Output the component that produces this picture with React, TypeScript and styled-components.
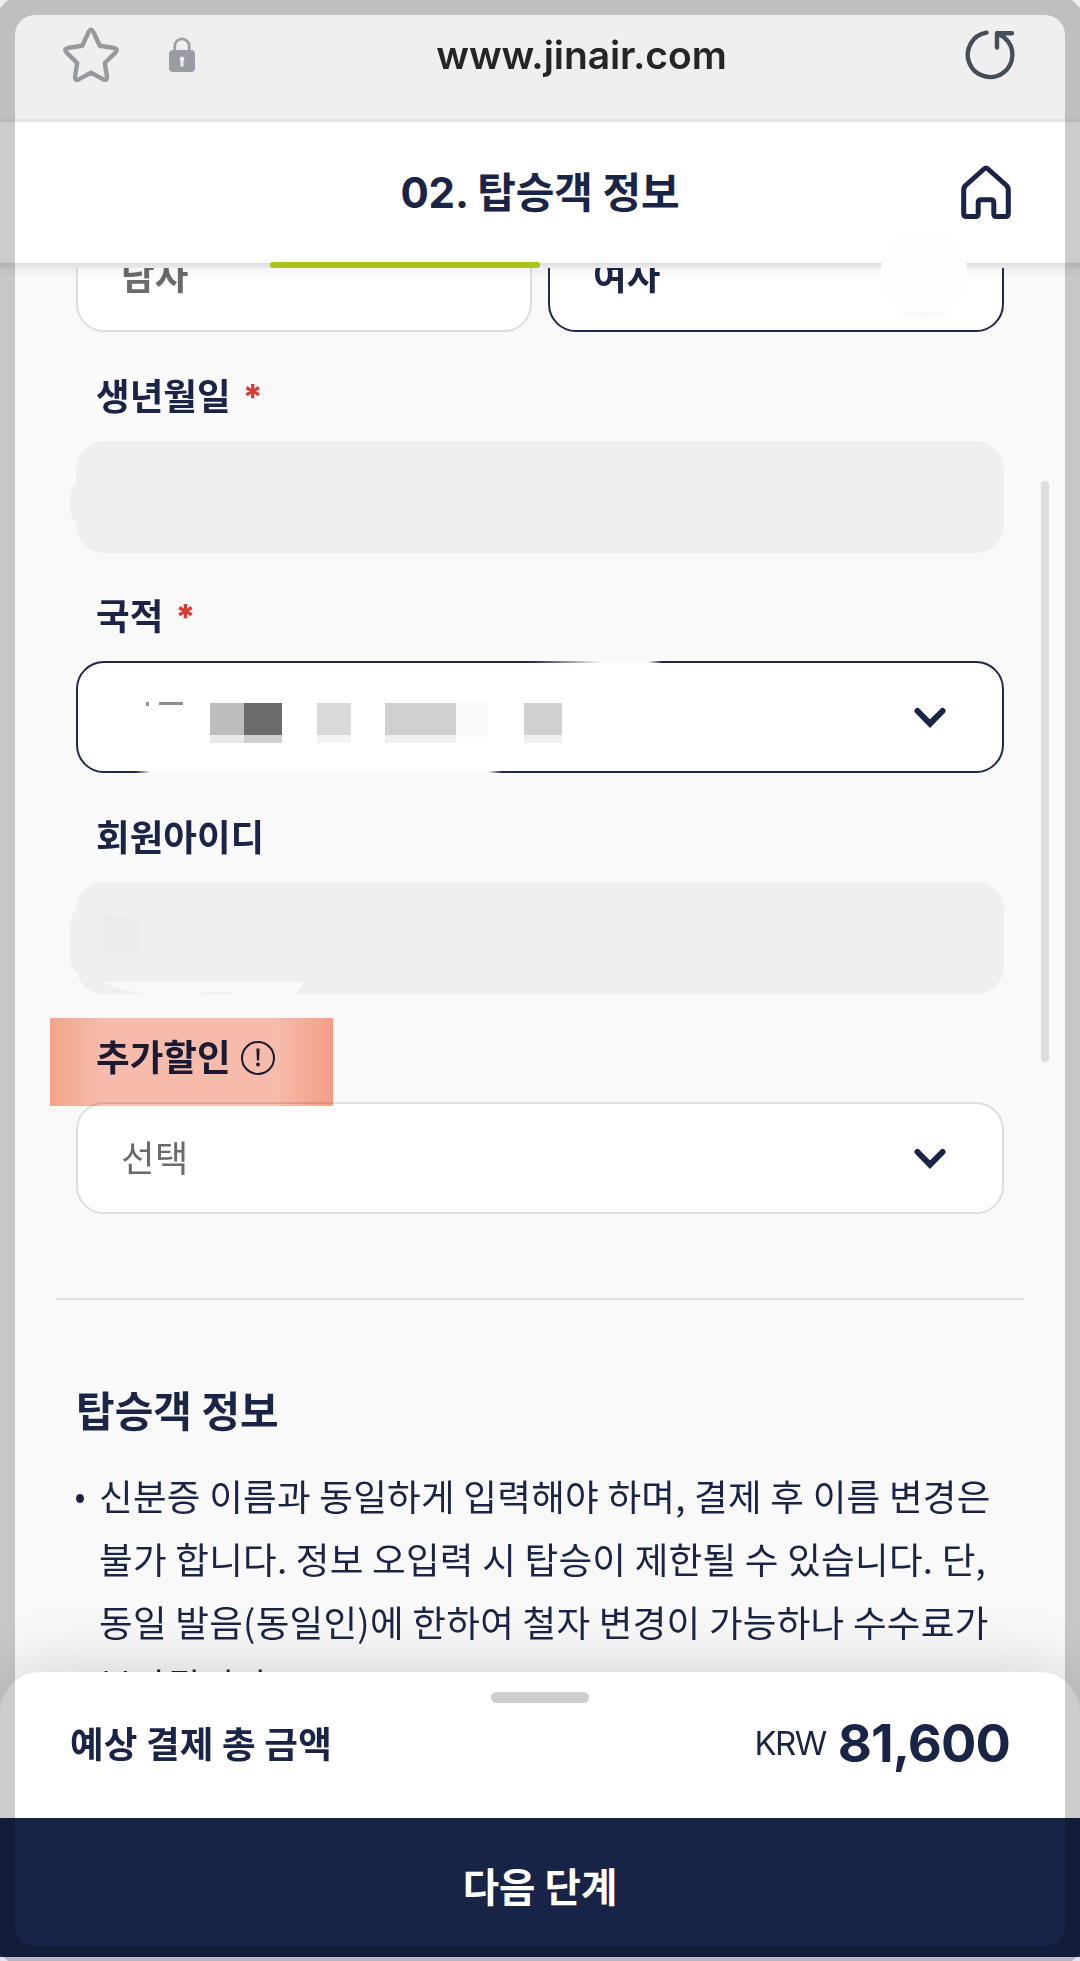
import React from 'react';
import styled, { createGlobalStyle, css } from 'styled-components';

const NAVY = '#1a2446';
const KR = `'Noto Sans CJK KR', 'Noto Sans', sans-serif`;
const LATIN = `Inter, 'Noto Sans CJK KR', sans-serif`;

const GlobalStyle = createGlobalStyle`
  *, *::before, *::after { box-sizing: border-box; }
  body { margin: 0; background: #f9f9f9; }
`;

const Screen = styled.div`
  position: relative;
  display: flex;
  flex-direction: column;
  width: 1080px;
  height: 1961px;
  overflow: hidden;
  background: #f9f9f9;
  color: ${NAVY};
  font-family: ${KR};
`;

const AddressBar = styled.header`
  display: flex;
  align-items: flex-start;
  flex: none;
  height: 122px;
  padding: 26px 61px 0 62px;
  background: #efefef;
  border-bottom: 3px solid #e6e6e6;
`;

const LockIcon = styled.svg`
  margin: 8px 0 0 46px;
`;

const Url = styled.div`
  flex: 1;
  padding: 5px 0 0 4px;
  text-align: center;
  font: 600 39px/48px ${LATIN};
  letter-spacing: -0.1px;
  color: #252525;
`;

const StepHeader = styled.div`
  position: relative;
  z-index: 2;
  display: grid;
  grid-template-columns: 1fr auto 1fr;
  align-items: center;
  flex: none;
  height: 141px;
  padding: 0 67px;
  background: #fff;
`;

const StepTitle = styled.h1`
  grid-column: 2;
  margin: 0;
  font: 700 42px/60px ${LATIN};
  letter-spacing: -0.15px;
`;

const HomeIcon = styled.svg`
  justify-self: end;
`;

const ProgressTrack = styled.div`
  position: relative;
  z-index: 2;
  display: grid;
  grid-template-columns: repeat(4, 1fr);
  flex: none;
  height: 5px;
  background: linear-gradient(#dedede, #ebebeb);
  box-shadow: 0 3px 8px rgba(0, 0, 0, 0.09);
`;

const ProgressStep = styled.div`
  grid-column: 2;
  height: 6px;
  margin-top: -1px;
  border-radius: 3px;
  background: #acc31c;
`;

const Content = styled.main`
  flex: 1;
  min-height: 0;
  overflow: hidden;
  padding: 0 76px;
`;

const GenderRow = styled.div`
  display: grid;
  grid-template-columns: 1fr 1fr;
  gap: 16px;
  margin-top: -48px;
`;

const Box = styled.div<{ $tone?: 'active' | 'disabled' }>`
  position: relative;
  display: flex;
  align-items: center;
  justify-content: space-between;
  height: 112px;
  padding: 0 54px 0 43px;
  border-radius: 28px;
  border: 2px solid #dedede;
  background: #fff;
  font-size: 36.6px;
  color: #6a6a6a;
  ${(p) => p.$tone === 'active' && css`border-color: #20294a; color: ${NAVY};`}
  ${(p) => p.$tone === 'disabled' && css`border-color: #efefef; background: #efefef;`}
`;

const GenderText = styled.span`
  margin-bottom: 3px;
  font-weight: 700;
  line-height: 52px;
`;

const Placeholder = styled.span`
  margin-bottom: 2px;
  line-height: 52px;
`;

const Label = styled.div`
  display: flex;
  align-items: center;
  height: 108.5px;
  padding: 17px 0 0 20px;
  font-size: 36.6px;
  font-weight: 700;
  line-height: 52px;
`;

const Required = styled.span`
  margin: 4px 0 0 12px;
  font-family: ${LATIN};
  font-size: 35px;
  font-weight: 800;
  color: #d63b35;
`;

const Highlight = styled.div`
  position: absolute;
  z-index: 1;
  left: -28px;
  top: -86px;
  width: 283px;
  height: 88px;
  background: linear-gradient(90deg, #fba78d 0%, #fbb5a1 10%, #fcc0af 18%, #fcc0af 80%, #fbb19c 90%, #faa086 100%);
  mix-blend-mode: multiply;
`;

const InfoIcon = styled.svg`
  margin: 3px 0 0 9px;
`;

const Mosaic = styled.div`
  position: absolute;
  left: 132px;
  top: 40px;
  display: flex;
`;

const Pixel = styled.i<{ $w: number; $c: string; $gap?: number }>`
  width: ${(p) => p.$w}px;
  height: 40px;
  margin-left: ${(p) => p.$gap ?? 0}px;
  background: ${(p) => p.$c};
  -webkit-mask: linear-gradient(#000 80%, rgba(0, 0, 0, 0.32) 80%);
  mask: linear-gradient(#000 80%, rgba(0, 0, 0, 0.32) 80%);
`;

const Tick = styled.i<{ $x: number; $w: number; $h: number }>`
  position: absolute;
  left: ${(p) => p.$x}px;
  top: 39px;
  width: ${(p) => p.$w}px;
  height: ${(p) => p.$h}px;
  background: #8f8f8f;
`;

const BorderGap = styled.i<{ $edge: 'top' | 'bottom'; $x: number; $w: number; $fade?: number }>`
  position: absolute;
  left: ${(p) => p.$x}px;
  ${(p) => p.$edge}: -2px;
  width: ${(p) => p.$w}px;
  height: 2px;
  background: linear-gradient(
    90deg,
    transparent,
    #fcfcfc ${(p) => p.$fade ?? 14}px,
    #fcfcfc calc(100% - 14px),
    transparent
  );
`;

const Bump = styled.i<{ $y: number; $h: number }>`
  position: absolute;
  left: -8px;
  top: ${(p) => p.$y}px;
  width: 12px;
  height: ${(p) => p.$h}px;
  border-radius: 8px 0 0 8px / 16px 0 0 16px;
  background: #efefef;
`;

const Smear = styled.svg`
  position: absolute;
  left: 20px;
  top: 25px;
`;

const Divider = styled.hr`
  height: 2px;
  margin: 84px -20px 0;
  border: 0;
  background: #dfdfdf;
`;

const NoticeTitle = styled.h2`
  margin: 79px 0 0;
  font-size: 42px;
  font-weight: 700;
  line-height: 60px;
`;

const NoticeList = styled.ul`
  margin: 25px -10px 0 0;
  padding: 0;
  list-style: none;
`;

const NoticeItem = styled.li`
  display: flex;
  gap: 15px;
  font-size: 36.6px;
  line-height: 63px;
  white-space: pre;

  &::before {
    content: '';
    flex: none;
    width: 8px;
    height: 9px;
    margin-top: 30px;
    border-radius: 50%;
    background: ${NAVY};
  }
`;

const NoticeText = styled.div`
  letter-spacing: 0.25px;
`;

const Sheet = styled.section`
  position: relative;
  z-index: 3;
  flex: none;
  display: flex;
  flex-direction: column;
  height: 146px;
  margin-top: -40px;
  border-radius: 40px 40px 0 0;
  background: #fff;
  box-shadow: 0 -4px 64px rgba(0, 0, 0, 0.16);
`;

const Handle = styled.div`
  width: 98px;
  height: 11px;
  margin: 20px auto 0;
  border-radius: 6px;
  background: #cecece;
`;

const TotalRow = styled.div`
  display: flex;
  justify-content: space-between;
  align-items: center;
  height: 80px;
  padding: 0 70px 0 70px;
`;

const TotalLabel = styled.span`
  margin-bottom: 2px;
  font-size: 36.6px;
  font-weight: 700;
  letter-spacing: 0.15px;
`;

const Price = styled.div`
  display: flex;
  align-items: center;
  gap: 12px;
  font-family: ${LATIN};
`;

const Currency = styled.span`
  font-size: 33px;
  font-weight: 400;
  letter-spacing: -1.6px;
`;

const Amount = styled.strong`
  font-size: 52.5px;
  font-weight: 700;
  letter-spacing: -0.9px;
`;

const NextButton = styled.button`
  position: relative;
  z-index: 3;
  flex: none;
  height: 139px;
  padding: 0 0 5px;
  border: 0;
  background: #182447;
  color: #fff;
  font: 700 39.6px/58px ${KR};
`;

const BottomStrip = styled.div`
  position: relative;
  z-index: 3;
  flex: none;
  height: 4px;
  background: #e3e4f0;
`;

const ScrollThumb = styled.div`
  position: absolute;
  left: 1041px;
  top: 481px;
  width: 8px;
  height: 581px;
  border-radius: 4px;
  background: #dddddd;
`;

const TouchSpot = styled.div`
  position: absolute;
  z-index: 3;
  left: 880px;
  top: 231px;
  width: 88px;
  height: 88px;
  border-radius: 50%;
  background: linear-gradient(#fdfdfd 0, #fefefe 40px 80px, #f9f9f9 80px);
`;

const FrameShade = styled.div`
  position: absolute;
  z-index: 5;
  left: 15px;
  top: 15px;
  width: 1050px;
  height: 1931px;
  border-radius: 20px;
  box-shadow: 0 0 0 24px rgba(0, 0, 0, 0.2);
  pointer-events: none;
`;

const Chevron = () => (
  <svg width="36" height="26" viewBox="0 0 36 26" fill="none">
    <path d="M5.5 7 18 19.7 30.5 7" stroke={NAVY} strokeWidth="6" strokeLinecap="round" />
  </svg>
);

const FormField = ({
  label,
  required,
  extra,
  children,
}: {
  label: string;
  required?: boolean;
  extra?: React.ReactNode;
  children: React.ReactNode;
}) => (
  <div>
    <Label>
      {label}
      {required && <Required>*</Required>}
      {extra}
    </Label>
    {children}
  </div>
);

export default function App() {
  return (
    <>
      <GlobalStyle />
      <Screen>
        <AddressBar>
          <svg width="58" height="58" viewBox="0 0 58 58" fill="none">
            <path
              d="M26.8 5.6Q29 2 31.2 5.6L37.8 19.8 52.3 22Q56.6 23.2 53.6 26.4L42.8 37 45 51Q45 55 41.3 53.4L29 46.6 16.7 53.4Q13 55 13 51L15.2 37 4.4 26.4Q1.4 23.2 5.7 22L20.2 19.8Z"
              stroke="#969a9f"
              strokeWidth="4.4"
              strokeLinejoin="round"
            />
          </svg>
          <LockIcon width="32" height="40" viewBox="0 0 32 40" fill="none">
            <path d="M8.800 18V12a7.200 7.200 0 0 1 14.400 0v6" stroke="#9ca0a6" strokeWidth="2.800" />
            <rect x="3" y="16" width="26" height="22" rx="4" fill="#999da3" />
            <path d="M16 22.500a2.600 2.600 0 0 1 1.500 4.600V32.500h-3V27.100A2.600 2.600 0 0 1 16 22.500Z" fill="#efefef" />
          </LockIcon>
          <Url>www.jinair.com</Url>
          <svg width="58" height="58" viewBox="0 0 58 58" fill="none">
            <path
              d="M25.500 6.700A22.300 22.300 0 1 0 43.500 11.700Q41 9.700 36 7.200M36 21.500V7.200H51"
              stroke="#444e58"
              strokeWidth="4.400"
              strokeLinecap="round"
              strokeLinejoin="round"
            />
          </svg>
        </AddressBar>

        <StepHeader>
          <StepTitle>02. 탑승객 정보</StepTitle>
          <HomeIcon width="56" height="60" viewBox="0 0 56 60" fill="none">
            <path
              d="M27 6Q29 4.200 31 6L49.500 22.500Q51.300 24.500 51.300 27V50.500Q51.300 53.500 48.300 53.500H39.500Q36.800 53.500 36.800 50.500V39.800Q36.800 36.800 34 36.800H24Q21.200 36.800 21.200 39.800V50.500Q21.200 53.500 18.500 53.500H9.700Q6.700 53.500 6.700 50.500V27Q6.700 24.500 8.500 22.500Z"
              stroke={NAVY}
              strokeWidth="5"
              strokeLinejoin="round"
            />
          </HomeIcon>
        </StepHeader>
        <ProgressTrack>
          <ProgressStep />
        </ProgressTrack>

        <Content>
          <GenderRow>
            <Box>
              <GenderText>남자</GenderText>
            </Box>
            <Box $tone="active">
              <GenderText>여자</GenderText>
            </Box>
          </GenderRow>

          <FormField label="생년월일" required>
            <Box $tone="disabled">
              <Bump $y={40} $h={40} />
            </Box>
          </FormField>

          <FormField label="국적" required>
            <Box $tone="active">
              <Mosaic>
                <Pixel $w={34} $c="#bdbdbd" />
                <Pixel $w={38} $c="#6b6b6b" />
                <Pixel $w={34} $c="#dadada" $gap={35} />
                <Pixel $w={71} $c="#d0d0d0" $gap={34} />
                <Pixel $w={32} $c="#fafafa" />
                <Pixel $w={38} $c="#d0d0d0" $gap={36} />
              </Mosaic>
              <Tick $x={68} $w={3} $h={4} />
              <Tick $x={81} $w={24} $h={3} />
              <BorderGap $edge="bottom" $x={58} $w={366} />
              <BorderGap $edge="top" $x={454} $w={130} $fade={70} />
              <span />
              <Chevron />
            </Box>
          </FormField>

          <FormField label="회원아이디">
            <Box $tone="disabled">
              <Bump $y={26} $h={62} />
              <Smear width="220" height="86" viewBox="0 0 220 86">
                <path d="M5 4 36 10 42 14V43H5Z" fill="#e9ebec" />
                <path d="M5 73H207L198 85H138Q120 80 98 85H50Q20 81 5 73Z" fill="#f9f9f9" />
              </Smear>
            </Box>
          </FormField>

          <FormField
            label="추가할인"
            extra={
              <InfoIcon width="36" height="36" viewBox="0 0 36 36" fill="none">
                <circle cx="18" cy="18" r="16" stroke={NAVY} strokeWidth="2" />
                <path d="M16.400 8.500h3.200l-.5 12h-2.200Z" fill={NAVY} />
                <circle cx="18" cy="24.500" r="2" fill={NAVY} />
              </InfoIcon>
            }
          >
            <Box>
              <Highlight />
              <Placeholder>선택</Placeholder>
              <Chevron />
            </Box>
          </FormField>

          <Divider />

          <NoticeTitle>탑승객 정보</NoticeTitle>
          <NoticeList>
            <NoticeItem>
              <NoticeText>
                {'신분증 이름과 동일하게 입력해야 하며, 결제 후 이름 변경은\n불가 합니다. 정보 오입력 시 탑승이 제한될 수 있습니다. 단,\n동일 발음(동일인)에 한하여 철자 변경이 가능하나 수수료가\n부과됩니다.'}
              </NoticeText>
            </NoticeItem>
          </NoticeList>
        </Content>

        <Sheet>
          <Handle />
          <TotalRow>
            <TotalLabel>예상 결제 총 금액</TotalLabel>
            <Price>
              <Currency>KRW</Currency>
              <Amount>81,600</Amount>
            </Price>
          </TotalRow>
        </Sheet>
        <NextButton>다음 단계</NextButton>
        <BottomStrip />

        <ScrollThumb />
        <TouchSpot />
        <FrameShade />
      </Screen>
    </>
  );
}
